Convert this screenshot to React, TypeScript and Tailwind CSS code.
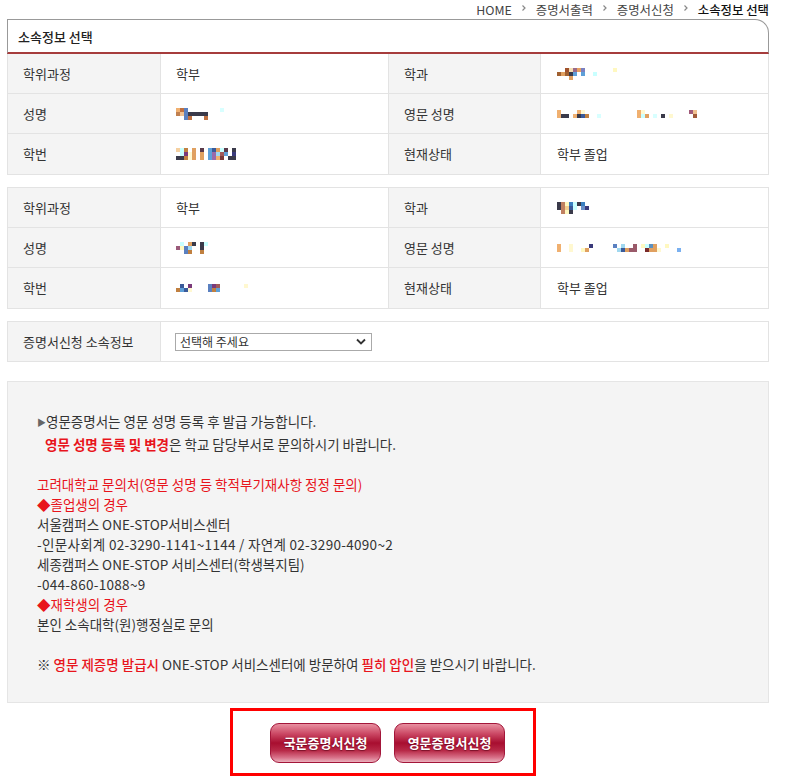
import React from "react";

const font = { fontFamily: '"Noto Sans CJK KR", "Noto Sans", sans-serif' };

function Pix({ colors }: { colors: string[][] }) {
  return (
    <div className="flex flex-col">
      {colors.map((row, i) => (
        <div key={i} className="flex">
          {row.map((c, j) => (
            <div key={j} className="w-[4px] h-[4px]" style={{ background: c }} />
          ))}
        </div>
      ))}
    </div>
  );
}

const t = "transparent";
const P1 = [
  [t, t, "#a0522d", "#f5deb3", "#9a6a8a", "#e8a060", "#7a80c0", t, t, t, t, t, t, t, "#fff8c0"],
  ["#a06030", "#e0a060", "#a06030", "#3a3a4a", "#5ea0d8", t, "#5ea0d8", t, t, "#c8ffff", t, t, t, t, t],
  [t, t, t, "#e0a060", t, t, t, t, t, t, t, t, t, t, t],
];
const P2 = [
  ["#f0b070", "#c07040", "#5a80c0", t, t, t, t, t, t, t, t, "#d8ffff"],
  ["#c08050", "#f0c090", "#5a80c0", "#3a3a4a", "#3a3a4a", "#3a3a4a", "#3a3a4a", "#3a3a4a", t, t, t, t],
  [t, t, "#5a80c0", "#c07040", t, t, t, "#c07040", t, t, t, t],
];
const P3 = [
  ["#f5d0a0", "#c8ffff", "#c08040", t, "#e0a060", t, "#5a3a4a", t, "#5ea0d8", "#3a5a9a", "#e0a060", "#c8ffff", "#5a3a4a", t, "#3a3a4a"],
  [t, "#c8ffff", "#7a3a7a", "#fff8d0", "#e0a060", t, "#e0a060", t, "#5ea0d8", "#9a6aaa", "#a0d8f0", "#a05a5a", "#5ea0d8", t, "#3a3a7a"],
  ["#3a3a4a", "#3a3a4a", "#c08040", "#fff8d0", "#e0a060", t, "#e0a060", t, "#5ea0d8", "#9a6aaa", "#f0b070", "#7a3a3a", t, "#3a3a4a", "#3a3a4a"],
];
const P4 = [
  ["#f0b070", t, t, t, t, "#f0b070", "#fff8d0", t, t, t, t, t, t, t, t, t, t, t, t, t, "#f0b070", "#fff8d0", t, t, t, t, t, t, t, t, t, t, t, "#a05a7a", "#f0c090"],
  ["#f0b070", "#3a3a4a", "#3a3a4a", t, "#f0b070", "#3a3a4a", "#3a5a9a", "#c08040", t, t, "#d8ffff", t, t, t, t, t, t, t, t, t, "#f0b070", "#c8ffff", "#e0a060", t, "#d8ffff", t, "#3a3a4a", t, "#fff8d0", t, t, t, t, t, "#a05a3a"],
];
const P5 = [
  [t, "#c8ffff", t, "#e0a060", "#3a3a4a", t, "#3a3a4a", "#c8ffff"],
  ["#9a5a7a", "#fff8c0", "#5a80c0", "#a0d8f0", t, t, "#3a3a4a", t],
  [t, t, "#5a80c0", "#c08040", t, t, "#c08040", t],
];
const P6 = [
  [t, "#3a5a9a", t, "#7a3a7a", t, t, t, t, "#5a80c0", "#7a3a7a", "#a05a5a", t, t, t, t, t, t, "#fff8d0"],
  ["#c08040", "#5ea0d8", "#3a5a9a", "#fff8d0", t, t, t, t, "#5a80c0", "#c08040", "#5ea0d8", t, t, t, t, t, t, t],
];
const P7 = [
  ["#3a3a4a", "#c08060", "#fff8c0", "#3a80c0", "#c8ffff", "#3a3a4a", "#3a80c0", t],
  ["#3a3a4a", "#c08060", "#f5d090", "#3a5a9a", "#c8ffff", t, "#6a90c8", "#3a3a7a"],
  [t, "#c08060", "#fff8c0", "#3a3a4a", t, t, t, t],
];
const P8 = [
  ["#f0b070", t, t, "#fff8d0", t, t, t, t, "#3a3a7a", t, t, t, t, t, "#5a80c0", t, "#a0d8f0", t, t, "#9a5a6a", t, "#fff8c0", "#c8ffff", "#5a90c0", "#e0a060", t, t, "#fff8c0", t, t, t, t, t, t, t, t, t, t, t, t, t, t, t],
  ["#f0b070", t, t, "#fff8d0", t, t, "#fff8c0", "#e0a060", t, t, t, t, t, t, t, "#a0d8f0", "#3a5a9a", "#e0a060", "#9a5a6a", "#9a5a6a", t, t, "#7a2a2a", "#e0a060", "#e0a060", "#fff8d0", t, t, t, t, "#7ab0f0", t, t, t, t, t, t, t, t, t, t, t, t],
];

function Row({
  l1, v1, l2, v2, last,
}: { l1: string; v1: React.ReactNode; l2: string; v2: React.ReactNode; last?: boolean }) {
  const b = last ? "" : "border-b border-[#e3e3e3]";
  return (
    <div className={`grid grid-cols-[153px_228px_152px_228px] h-[40px] ${b}`}>
      <div className="bg-[#f4f4f4] flex items-center pl-[15px] border-r border-[#e3e3e3]">{l1}</div>
      <div className="flex items-center pl-[15px] border-r border-[#e3e3e3]">{v1}</div>
      <div className="bg-[#f4f4f4] flex items-center pl-[15px] border-r border-[#e3e3e3]">{l2}</div>
      <div className="flex items-center pl-[16px]">{v2}</div>
    </div>
  );
}

function Arrow() {
  return (
    <svg width="4" height="6" viewBox="0 0 4 6" className="mx-[10px] relative top-[-3px]">
      <path d="M0.5 0.5 L3 3 L0.5 5.5" stroke="#888" strokeWidth="1.2" fill="none" />
    </svg>
  );
}

export default function App() {
  return (
    <div className="w-[796px] h-[780px] bg-white text-[13px] text-[#333]" style={font}>
      <div className="ml-[7px] w-[762px]">
        {/* breadcrumb */}
        <div className="h-[19px] flex justify-end items-center text-[12.4px] text-[#444] pt-[2px] leading-none">
          <span>HOME</span>
          <Arrow />
          <span>증명서출력</span>
          <Arrow />
          <span>증명서신청</span>
          <Arrow />
          <span className="font-medium text-[#111]">소속정보 선택</span>
        </div>
        {/* tab box */}
        <div className="h-[35px] border-t border-l border-r border-[#999] rounded-tr-[14px] border-b-2 border-b-[#a63c3c] flex items-center pl-[10px] pt-[1px] text-[13px] font-medium text-[#222]">
          소속정보 선택
        </div>
        {/* table 1 */}
        <div className="border-l border-r border-b border-[#e3e3e3]">
          <Row l1="학위과정" v1="학부" l2="학과" v2={<Pix colors={P1} />} />
          <Row l1="성명" v1={<Pix colors={P2} />} l2="영문 성명" v2={<Pix colors={P4} />} />
          <Row l1="학번" v1={<Pix colors={P3} />} l2="현재상태" v2="학부 졸업" last />
        </div>
        {/* table 2 */}
        <div className="mt-[12px] border border-[#e3e3e3]">
          <Row l1="학위과정" v1="학부" l2="학과" v2={<Pix colors={P7} />} />
          <Row l1="성명" v1={<Pix colors={P5} />} l2="영문 성명" v2={<Pix colors={P8} />} />
          <Row l1="학번" v1={<Pix colors={P6} />} l2="현재상태" v2="학부 졸업" last />
        </div>
        {/* select row */}
        <div className="mt-[12px] border border-[#e3e3e3] h-[41px] grid grid-cols-[153px_1fr]">
          <div className="bg-[#f4f4f4] flex items-center pl-[15px] border-r border-[#e3e3e3]">증명서신청 소속정보</div>
          <div className="flex items-center pl-[14px]">
            <div className="w-[197px] h-[18px] border border-[#aaa] flex items-center justify-between pl-[4px] pr-[5px] text-[12px] text-[#333]">
              <span>선택해 주세요</span>
              <svg width="10" height="7" viewBox="0 0 10 7">
                <path d="M1 1.5 L5 5.5 L9 1.5" stroke="#333" strokeWidth="1.8" fill="none" />
              </svg>
            </div>
          </div>
        </div>
        {/* info box */}
        <div className="mt-[19px] bg-[#f4f4f4] border border-[#e5e5e5] h-[322px] pl-[29px] pt-[29px] leading-[20px] text-[13.5px] text-[#333]">
          <div>
            <span className="text-[#666] text-[9px] relative top-[-1px]">▶</span>영문증명서는 영문 성명 등록 후 발급 가능합니다.
          </div>
          <div className="pl-[8px]">
            <span className="text-[#e8141c] font-bold">영문 성명 등록 및 변경</span>은 학교 담당부서로 문의하시기 바랍니다.
          </div>
          <div className="h-[20px]" />
          <div className="text-[#e8141c]">고려대학교 문의처(영문 성명 등 학적부기재사항 정정 문의)</div>
          <div className="text-[#e8141c]">◆졸업생의 경우</div>
          <div>서울캠퍼스 ONE-STOP서비스센터</div>
          <div className="tracking-[0.3px]">-인문사회계 02-3290-1141~1144 / 자연계 02-3290-4090~2</div>
          <div>세종캠퍼스 ONE-STOP 서비스센터(학생복지팀)</div>
          <div className="tracking-[0.3px]">-044-860-1088~9</div>
          <div className="text-[#e8141c]">◆재학생의 경우</div>
          <div>본인 소속대학(원)행정실로 문의</div>
          <div className="h-[20px]" />
          <div>
            ※ <span className="text-[#e8141c] font-medium">영문 제증명 발급시</span> ONE-STOP 서비스센터에 방문하여{" "}
            <span className="text-[#e8141c] font-medium">필히 압인</span>을 받으시기 바랍니다.
          </div>
        </div>
        {/* buttons */}
        <div className="flex justify-center mt-[5px]">
          <div className="ml-[-11px] w-[306px] h-[68px] border-[3px] border-[#ff0000] flex items-center justify-center gap-[13px] pt-[1px] pl-[10px]">
            {["국문증명서신청", "영문증명서신청"].map((s) => (
              <div
                key={s}
                className="w-[111px] h-[40px] rounded-[9px] border border-[#a3163a] flex items-center justify-center text-white font-bold text-[13px]"
                style={{
                  background:
                    "linear-gradient(to bottom, #e890a0 0%, #cc4a66 25%, #a80e30 50%, #b82a48 70%, #d87088 88%, #eab0bc 100%)",
                  textShadow: "0 1px 1px rgba(80,0,20,0.6)",
                }}
              >
                {s}
              </div>
            ))}
          </div>
        </div>
      </div>
    </div>
  );
}
